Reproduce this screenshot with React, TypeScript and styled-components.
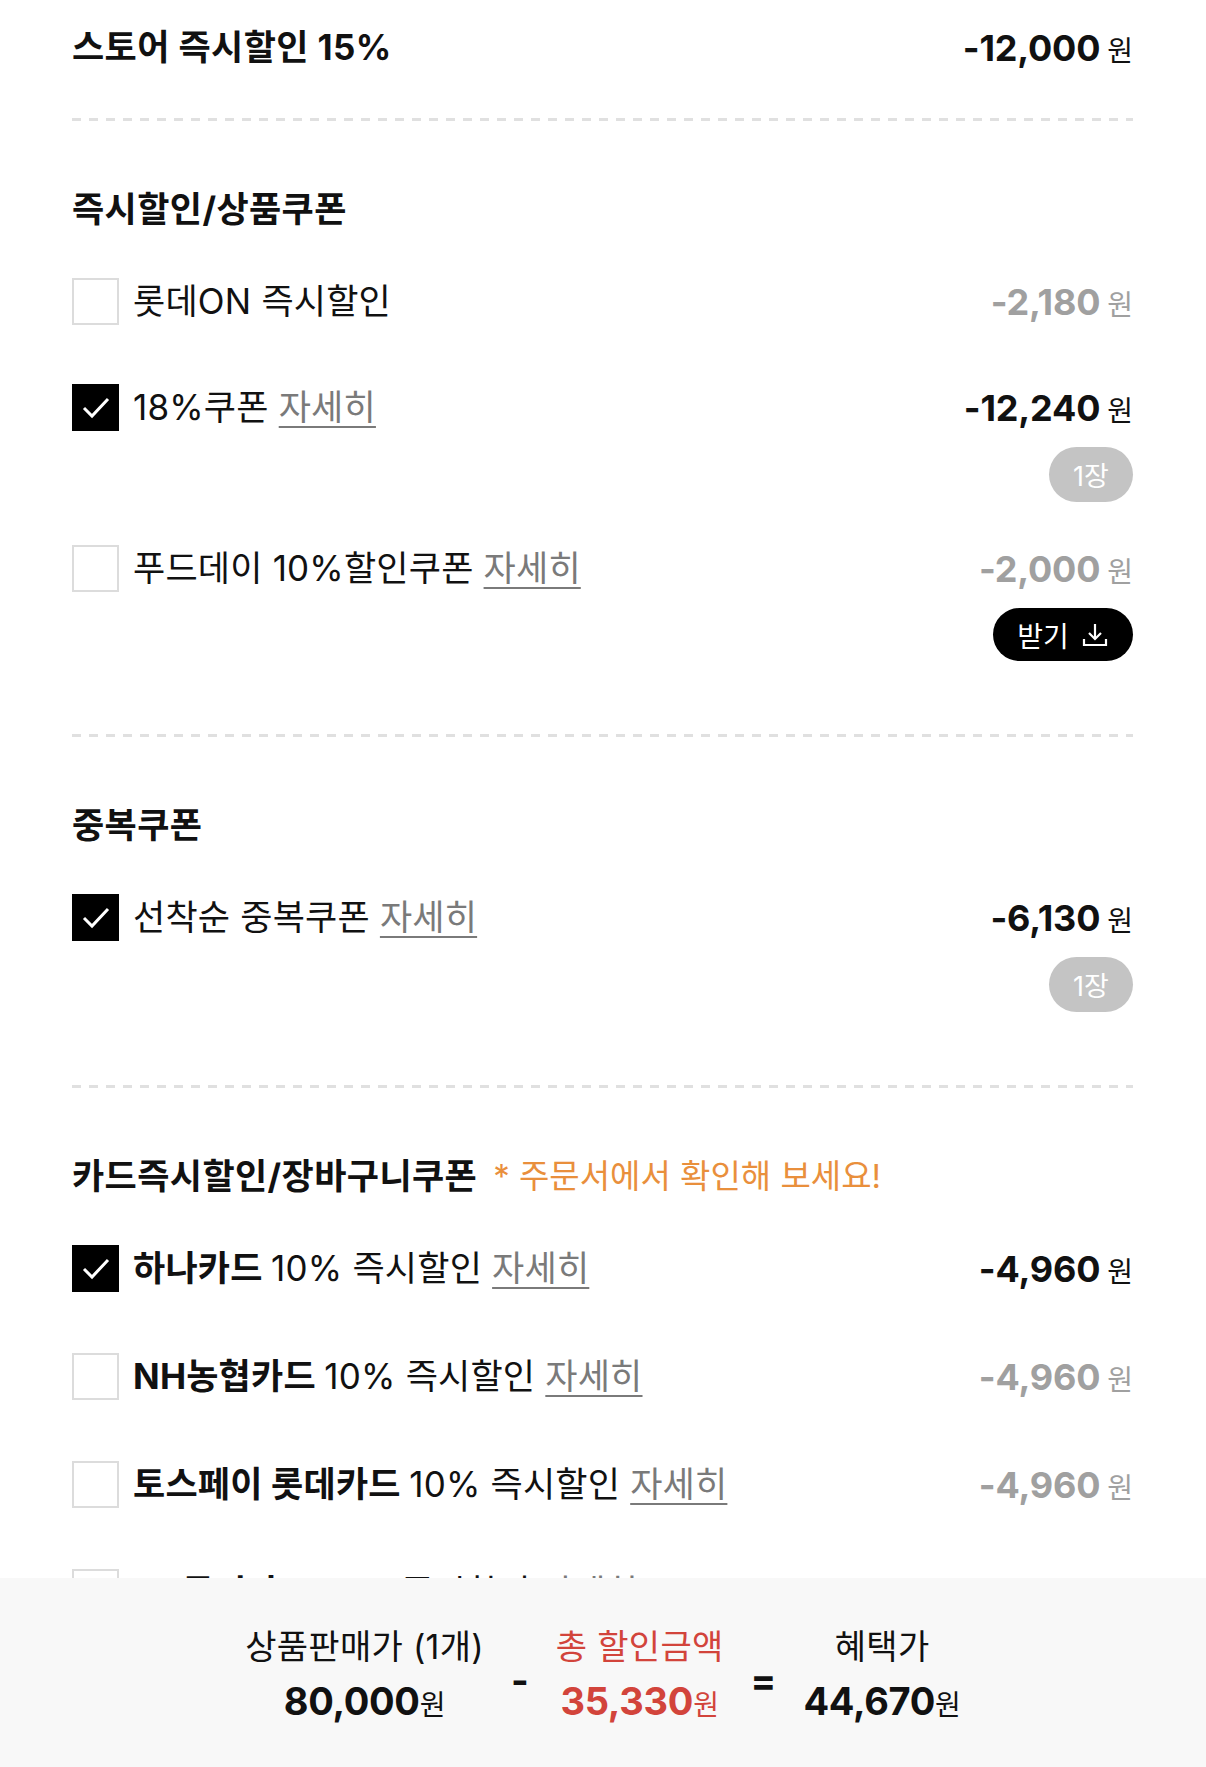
import React from 'react';
import styled, { createGlobalStyle } from 'styled-components';

const GlobalStyle = createGlobalStyle`
  body {
    margin: 0;
    background: #fff;
    color: #111;
    font-family: Inter, "Noto Sans CJK KR", sans-serif;
  }
`;

const Page = styled.div`
  padding: 24px 73px 220px 72px;
`;

const TopRow = styled.div`
  display: flex;
  align-items: center;
  height: 47px;
`;

const Title = styled.h2`
  margin: 0;
  font-size: 35px;
  line-height: 47px;
  font-weight: 700;
  letter-spacing: 0.4px;
`;

const Dash = styled.div<{ $top?: number }>`
  height: 3px;
  margin-top: ${(p) => p.$top ?? 0}px;
  background-image: linear-gradient(to right, #e0e0e0 9px, transparent 9px);
  background-size: 17px 3px;
`;

const Section = styled.section`
  padding: 62px 0 73px;
`;

const Heading = styled.div`
  display: flex;
  align-items: center;
  height: 47px;
  font-size: 35px;
  font-weight: 700;
  letter-spacing: 0.4px;
  white-space: nowrap;
`;

const Note = styled.span`
  margin-left: 16px;
  font-size: 33px;
  font-weight: 400;
  letter-spacing: 0;
  color: #e98f3c;
`;

const List = styled.div<{ $gap: number }>`
  display: flex;
  flex-direction: column;
  gap: ${(p) => p.$gap}px;
  margin-top: 48px;
`;

const Item = styled.div`
  display: flex;
  flex-direction: column;
`;

const Line = styled.div`
  display: flex;
  align-items: center;
  height: 47px;
  margin-bottom: 16px;
`;

const Box = styled.span<{ $checked?: boolean }>`
  flex: none;
  display: flex;
  align-items: center;
  justify-content: center;
  width: 47px;
  height: 47px;
  box-sizing: border-box;
  margin-right: 14px;
  border: 2px solid ${(p) => (p.$checked ? '#000' : '#dcdcdc')};
  background: ${(p) => (p.$checked ? '#000' : '#fff')};
`;

const Label = styled.span`
  font-size: 35px;
  line-height: 47px;
  letter-spacing: 0.2px;
  white-space: nowrap;
`;

const Strong = styled.b`
  font-weight: 700;
`;

const More = styled.span`
  color: #7a7a7a;
  text-decoration: underline;
  text-decoration-thickness: 2px;
  text-underline-offset: 6px;
`;

const Price = styled.span<{ $muted?: boolean }>`
  margin-left: auto;
  display: flex;
  align-items: baseline;
  color: ${(p) => (p.$muted ? '#a0a0a0' : '#111')};
  white-space: nowrap;
`;

const Num = styled.span`
  font-size: 36px;
  font-weight: 700;
  letter-spacing: -0.2px;
`;

const Won = styled.span`
  margin-left: 7px;
  font-size: 28px;
  font-weight: 400;
`;

const Extra = styled.div`
  display: flex;
  justify-content: flex-end;
`;

const Badge = styled.span`
  display: flex;
  align-items: center;
  justify-content: center;
  min-width: 84px;
  height: 55px;
  border-radius: 28px;
  background: #c4c4c4;
  color: #fff;
  font-size: 27px;
`;

const GetButton = styled.button`
  display: flex;
  align-items: center;
  justify-content: center;
  gap: 12px;
  width: 140px;
  height: 53px;
  padding: 0;
  border: none;
  border-radius: 27px;
  background: #000;
  color: #fff;
  font-family: inherit;
  font-size: 28px;
`;

const Bar = styled.div`
  position: fixed;
  left: 0;
  right: 0;
  bottom: 0;
  height: 189px;
  box-sizing: border-box;
  padding-top: 46px;
  background: #f8f8f8;
  display: flex;
  justify-content: center;
  align-items: flex-start;
`;

const Summary = styled.div`
  display: flex;
  align-items: center;
  gap: 27px;
`;

const Col = styled.div<{ $red?: boolean }>`
  display: flex;
  flex-direction: column;
  align-items: center;
  color: ${(p) => (p.$red ? '#d2443b' : '#111')};
`;

const ColLabel = styled.span`
  font-size: 34px;
  line-height: 46px;
  letter-spacing: 0.3px;
  white-space: nowrap;
`;

const ColValue = styled.span`
  display: flex;
  align-items: baseline;
  line-height: 62px;
`;

const BigNum = styled.span`
  font-size: 38px;
  font-weight: 700;
  letter-spacing: -0.3px;
`;

const SmallWon = styled.span`
  font-size: 28px;
`;

const Op = styled.span`
  font-size: 38px;
  font-weight: 700;
  line-height: 1;
`;

function Check() {
  return (
    <svg width="34" height="34" viewBox="0 0 34 34">
      <polyline points="5,17 13,25 29,8" fill="none" stroke="#fff" strokeWidth="3" />
    </svg>
  );
}

function DownloadIcon() {
  return (
    <svg width="28" height="28" viewBox="0 0 28 28" fill="none" stroke="#fff" strokeWidth="2.2">
      <path d="M14 3v15" />
      <path d="M8 12l6 6 6-6" />
      <path d="M3 18v6h22v-6" />
    </svg>
  );
}

type Row = {
  checked?: boolean;
  bold?: string;
  text: string;
  more?: boolean;
  amount: string;
  extra?: 'badge' | 'get';
};

const coupons: Row[] = [
  { text: '롯데ON 즉시할인', amount: '-2,180' },
  { checked: true, text: '18%쿠폰', more: true, amount: '-12,240', extra: 'badge' },
  { text: '푸드데이 10%할인쿠폰', more: true, amount: '-2,000', extra: 'get' },
];

const doubles: Row[] = [
  { checked: true, text: '선착순 중복쿠폰', more: true, amount: '-6,130', extra: 'badge' },
];

const cards: Row[] = [
  { checked: true, bold: '하나카드', text: '10% 즉시할인', more: true, amount: '-4,960' },
  { bold: 'NH농협카드', text: '10% 즉시할인', more: true, amount: '-4,960' },
  { bold: '토스페이 롯데카드', text: '10% 즉시할인', more: true, amount: '-4,960' },
  { bold: 'KB국민카드', text: '10% 즉시할인', more: true, amount: '-4,960' },
];

function CouponItem({ row }: { row: Row }) {
  return (
    <Item>
      <Line>
        <Box $checked={row.checked}>{row.checked && <Check />}</Box>
        <Label>
          {row.bold && <Strong>{row.bold} </Strong>}
          {row.text}
          {row.more && (
            <>
              {' '}
              <More>자세히</More>
            </>
          )}
        </Label>
        <Price $muted={!row.checked}>
          <Num>{row.amount}</Num>
          <Won>원</Won>
        </Price>
      </Line>
      {row.extra === 'badge' && (
        <Extra>
          <Badge>1장</Badge>
        </Extra>
      )}
      {row.extra === 'get' && (
        <Extra>
          <GetButton type="button">
            받기 <DownloadIcon />
          </GetButton>
        </Extra>
      )}
    </Item>
  );
}

export default function App() {
  return (
    <>
      <GlobalStyle />
      <Page>
        <TopRow>
          <Title>스토어 즉시할인 15%</Title>
          <Price>
            <Num>-12,000</Num>
            <Won>원</Won>
          </Price>
        </TopRow>
        <Dash $top={47} />

        <Section>
          <Heading>즉시할인/상품쿠폰</Heading>
          <List $gap={43}>
            {coupons.map((r) => (
              <CouponItem key={r.text} row={r} />
            ))}
          </List>
        </Section>
        <Dash />

        <Section>
          <Heading>중복쿠폰</Heading>
          <List $gap={43}>
            {doubles.map((r) => (
              <CouponItem key={r.text} row={r} />
            ))}
          </List>
        </Section>
        <Dash />

        <Section>
          <Heading>
            카드즉시할인/장바구니쿠폰
            <Note>* 주문서에서 확인해 보세요!</Note>
          </Heading>
          <List $gap={45}>
            {cards.map((r) => (
              <CouponItem key={r.bold} row={r} />
            ))}
          </List>
        </Section>
      </Page>

      <Bar>
        <Summary>
          <Col>
            <ColLabel>상품판매가 (1개)</ColLabel>
            <ColValue>
              <BigNum>80,000</BigNum>
              <SmallWon>원</SmallWon>
            </ColValue>
          </Col>
          <Op>-</Op>
          <Col $red>
            <ColLabel>총 할인금액</ColLabel>
            <ColValue>
              <BigNum>35,330</BigNum>
              <SmallWon>원</SmallWon>
            </ColValue>
          </Col>
          <Op>=</Op>
          <Col>
            <ColLabel>혜택가</ColLabel>
            <ColValue>
              <BigNum>44,670</BigNum>
              <SmallWon>원</SmallWon>
            </ColValue>
          </Col>
        </Summary>
      </Bar>
    </>
  );
}
